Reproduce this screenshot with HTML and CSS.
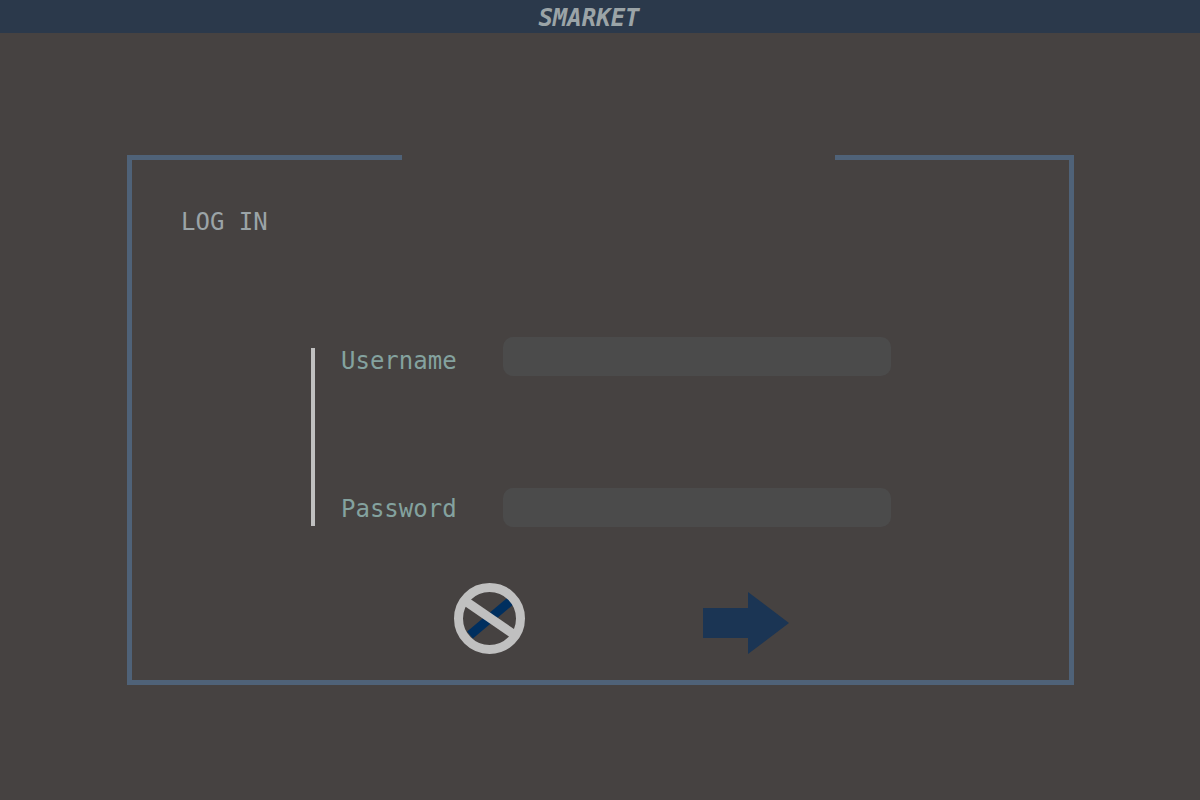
FILE: index.html
```html
<!DOCTYPE html>
<html lang="en">
<head>
<meta charset="utf-8">
<title>Smarket</title>
<link rel="stylesheet" href="styles.css">
</head>
<body>
<header class="topbar"><h1 class="brand">SMARKET</h1></header>
<main class="page">
  <form class="panel">
    <div class="panel-top"><span class="edge-left"></span><span class="edge-right"></span></div>
    <h2 class="title">LOG IN</h2>
    <div class="fields">
      <div class="labels">
        <label for="username">Username</label>
        <label for="password">Password</label>
      </div>
      <div class="inputs">
        <input class="input" id="username" type="text">
        <input class="input" id="password" type="password">
      </div>
    </div>
    <div class="actions">
      <button class="action" type="reset" aria-label="Cancel">
        <svg width="71" height="71" viewBox="0 0 71 71">
          <path d="M16 52 56 18.500" stroke="#002f5f" stroke-width="9"/>
          <circle cx="35.5" cy="35.5" r="31" fill="none" stroke="#c0c0c0" stroke-width="9"/>
          <path d="M12 18.500 60 51.500" stroke="#c0c0c0" stroke-width="9"/>
        </svg>
      </button>
      <button class="action" type="submit" aria-label="Continue">
        <svg width="86" height="62" viewBox="0 0 86 62">
          <path d="M0 16H45V0L86 31 45 62V46H0Z" fill="#1b3554"/>
        </svg>
      </button>
    </div>
  </form>
</main>
</body>
</html>
```
FILE: styles.css
```css
* {
  box-sizing: border-box;
}

body {
  margin: 0;
  background: #464241;
  color: #9ba4a7;
  font-family: "DejaVu Sans Mono", monospace;
  font-size: 24px;
  line-height: 28px;
}

.topbar {
  display: flex;
  justify-content: center;
  height: 33px;
  padding: 4px 22px 0 0;
  background: #2b394b;
}

.brand {
  margin: 0;
  font-size: 24px;
  font-style: italic;
  font-weight: bold;
}

.page {
  padding: 122px 126px 0 127px;
}

.panel {
  border: solid #4f6278;
  border-width: 0 5px 5px;
}

.panel-top {
  display: flex;
  justify-content: space-between;
}

.edge-left,
.edge-right {
  height: 5px;
  background: #4f6278;
}

.edge-left {
  width: 28.8%;
}

.edge-right {
  width: 25%;
}

.title {
  margin: 48px 0 0 49px;
  font-size: 24px;
  font-weight: normal;
}

.fields {
  display: flex;
  align-items: center;
  gap: 46px;
  margin: 101px 178px 0 179px;
}

.labels {
  display: flex;
  flex-direction: column;
  justify-content: space-between;
  height: 178px;
  margin-top: 10px;
  padding: 0 0 4px 26px;
  border-left: 4px solid #c0c0c0;
  color: #84a29f;
  line-height: 26px;
}

.inputs {
  display: flex;
  flex: 1;
  flex-direction: column;
  gap: 112px;
}

.input {
  width: 100%;
  height: 39px;
  padding: 0 12px;
  border: 0;
  border-radius: 10px;
  background: #4b4b4b;
  color: inherit;
  font: inherit;
}

.actions {
  display: flex;
  align-items: flex-end;
  gap: 178px;
  margin: 56px 0 26px 322px;
}

.action {
  padding: 0;
  border: 0;
  background: none;
  cursor: pointer;
}

.action svg {
  display: block;
}
```
